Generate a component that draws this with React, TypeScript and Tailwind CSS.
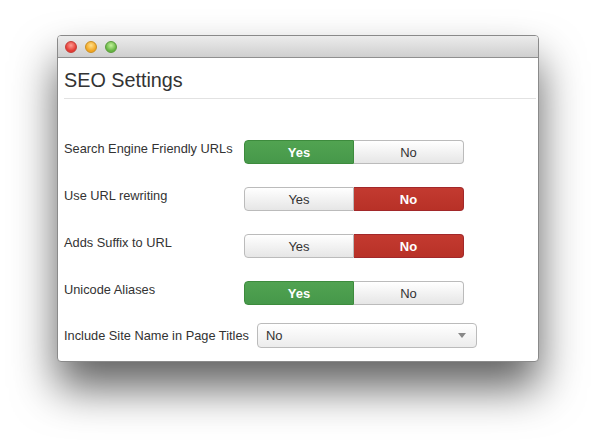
import React from 'react';

type Row = { label: string; value: 'yes' | 'no' };

const rows: Row[] = [
  { label: 'Search Engine Friendly URLs', value: 'yes' },
  { label: 'Use URL rewriting', value: 'no' },
  { label: 'Adds Suffix to URL', value: 'no' },
  { label: 'Unicode Aliases', value: 'yes' },
];

function Toggle({ value }: { value: 'yes' | 'no' }) {
  const off =
    'border-[#bbbbbb] bg-gradient-to-b from-[#ffffff] to-[#e6e6e6] text-[#333333] font-normal';
  return (
    <div className="flex h-[24px] w-[220px] text-[13px] leading-none">
      <div
        className={
          'flex w-[110px] items-center justify-center rounded-l-[4px] border ' +
          (value === 'yes'
            ? 'border-[#3d8b3d] bg-gradient-to-b from-[#51a351] to-[#46984a] font-bold text-white'
            : off)
        }
      >
        Yes
      </div>
      <div
        className={
          'flex w-[110px] items-center justify-center rounded-r-[4px] border border-l-0 ' +
          (value === 'no'
            ? 'border-[#a2282a] bg-gradient-to-b from-[#c33a30] to-[#b83127] font-bold text-white'
            : off)
        }
      >
        No
      </div>
    </div>
  );
}

export default function App() {
  return (
    <div
      className="h-[441px] w-[596px] bg-white pl-[57px] pt-[35px] text-[#333333]"
      style={{ fontFamily: '"Liberation Sans", Arial, sans-serif' }}
    >
      <div className="flex h-[327px] w-[482px] flex-col overflow-hidden rounded-[4px] border border-[#8a8a8a] bg-white shadow-[0_26px_44px_rgba(0,0,0,0.62)]">
        <div className="flex h-[22px] items-center gap-[8px] border-b border-[#8f8f8f] bg-gradient-to-b from-[#ececec] to-[#cfcfcf] pl-[7px]">
          <span className="h-[12px] w-[12px] rounded-full border border-[#c43c36] bg-[radial-gradient(circle_at_50%_35%,#ff9b93,#e33b34_65%)]" />
          <span className="h-[12px] w-[12px] rounded-full border border-[#c98f22] bg-[radial-gradient(circle_at_50%_35%,#ffe08a,#f2a623_65%)]" />
          <span className="h-[12px] w-[12px] rounded-full border border-[#5a9a3a] bg-[radial-gradient(circle_at_50%_35%,#c2f29a,#66b544_65%)]" />
        </div>
        <div className="flex flex-col pl-[6px] pr-[2px]">
          <h1 className="mt-[10px] text-[19.8px] leading-[24px] text-[#333333]">SEO Settings</h1>
          <div className="mt-[6px] h-px bg-[#e2e2e2]" />
          <div className="mt-[41px] flex flex-col gap-[23px]">
            {rows.map((r) => (
              <div key={r.label} className="flex items-start">
                <div className="w-[180px] text-[12.8px] leading-[17px]">{r.label}</div>
                <Toggle value={r.value} />
              </div>
            ))}
          </div>
          <div className="mt-[18px] flex items-center">
            <div className="mr-[8px] text-[12.8px] leading-[18px]">Include Site Name in Page Titles</div>
            <div className="flex h-[25px] w-[220px] items-center justify-between rounded-[4px] border border-[#bbbbbb] bg-gradient-to-b from-[#ffffff] to-[#ececec] pl-[8px] pr-[10px] text-[13px]">
              <span>No</span>
              <svg width="8" height="5" viewBox="0 0 8 5">
                <path d="M0 0h8L4 5z" fill="#888888" />
              </svg>
            </div>
          </div>
        </div>
      </div>
    </div>
  );
}
